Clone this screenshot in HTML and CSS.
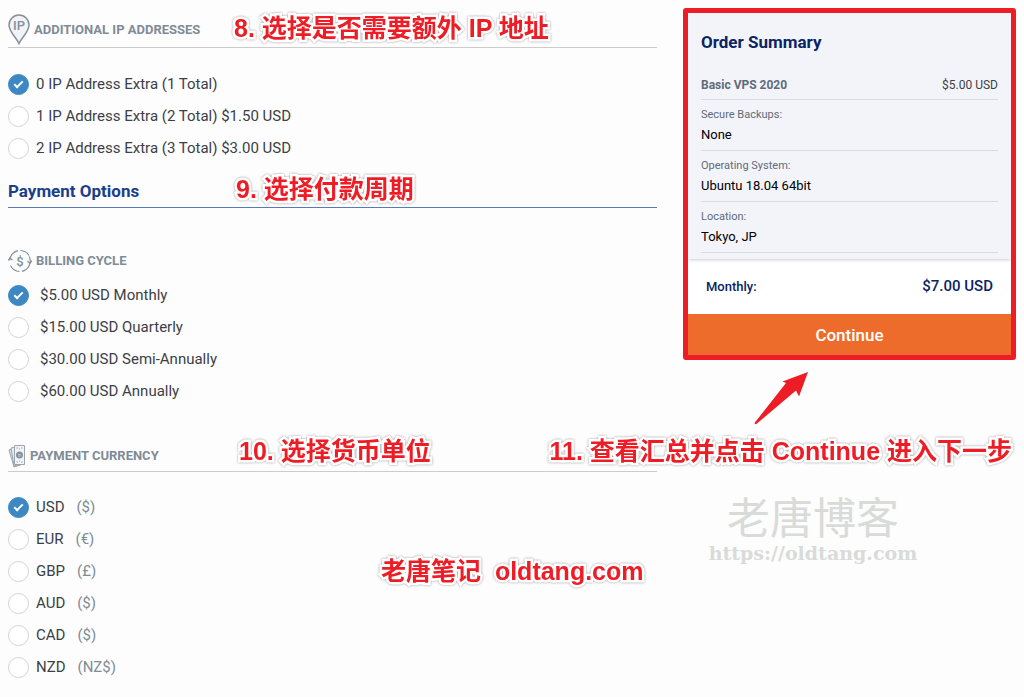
FILE: index.html
```html
<!DOCTYPE html>
<html lang="zh-CN">
<head>
    <meta charset="UTF-8">
    <meta name="viewport" content="width=device-width, initial-scale=1.0">
    <title>Configure VPS</title>
    <link rel="stylesheet" href="styles.css">
</head>
<body>

    <form class="page">
        <main class="config">

            <!-- Additional IP -->
            <section>
                <h3 class="heading lined">
                    <svg class="icon-pin" width="22" height="31" viewBox="0 0 22 31">
                        <path d="M11 29.500C8.500 23.500 1 18 1 11a10 10 0 0 1 20 0c0 7-7.500 12.500-10 18.500z" fill="#f1f3f9" stroke="#84919b" stroke-width="1.500"/>
                        <text x="11" y="16" text-anchor="middle">IP</text>
                    </svg>
                    Additional IP Addresses
                    <span class="note note-ip">8. 选择是否需要额外 IP 地址</span>
                </h3>
                <div class="options">
                    <label><input type="radio" name="ip" checked>0 IP Address Extra (1 Total)</label>
                    <label><input type="radio" name="ip">1 IP Address Extra (2 Total) $1.50 USD</label>
                    <label><input type="radio" name="ip">2 IP Address Extra (3 Total) $3.00 USD</label>
                </div>
            </section>

            <h2 class="title">Payment Options
                <span class="note note-cycle">9. 选择付款周期</span>
            </h2>

            <!-- Billing cycle -->
            <section class="billing">
                <h3 class="heading">
                    <svg width="24" height="24" viewBox="0 0 24 24" fill="none" stroke="#84919b" stroke-width="1.200">
                        <path d="M1.700 11.500A10.500 10.500 0 0 1 10 1.700M12.500 1.500A10.500 10.500 0 0 1 21 6.500M22 13A10.500 10.500 0 0 1 14 22.300M11.500 22.500A10.500 10.500 0 0 1 2.500 16.500"/>
                        <path d="M21.500 7.500l1 5.500M19.500 12l2.500 2.500 2-3M0 11.500l2-2.500 2.500 2"/>
                        <text x="12" y="17" text-anchor="middle">$</text>
                    </svg>
                    Billing Cycle
                </h3>
                <div class="options wide">
                    <label><input type="radio" name="cycle" checked>$5.00 USD Monthly</label>
                    <label><input type="radio" name="cycle">$15.00 USD Quarterly</label>
                    <label><input type="radio" name="cycle">$30.00 USD Semi-Annually</label>
                    <label><input type="radio" name="cycle">$60.00 USD Annually</label>
                </div>
            </section>

            <!-- Currency -->
            <section class="currency">
                <h3 class="heading lined">
                    <svg width="18" height="24" viewBox="0 0 18 24" stroke="#9aa5af">
                        <path d="M1 6l9-3 5 17-9 3z" fill="#dfe3e9"/>
                        <path d="M3 4l9-2 3 18-9 2z" fill="#e8ebf0"/>
                        <path d="M6.500 1.500h10v19h-10z" fill="#f1f3f9"/>
                        <circle cx="11.500" cy="11" r="3.500" fill="#84919b" stroke="none"/>
                        <path d="M10 10.500h3M10 12h3" stroke="#cfd5db" stroke-width=".7"/>
                        <path d="M8.500 4h1.500M13 4h1.500M8.500 18h1.500M13 18h1.500M11 5h1M11 17h1"/>
                    </svg>
                    Payment Currency
                    <span class="note note-currency">10. 选择货币单位</span>
                </h3>
                <div class="options">
                    <label><input type="radio" name="currency" checked>USD <span class="sign">($)</span></label>
                    <label><input type="radio" name="currency">EUR <span class="sign">(€)</span></label>
                    <label><input type="radio" name="currency">GBP <span class="sign">(£)</span></label>
                    <label><input type="radio" name="currency">AUD <span class="sign">($)</span></label>
                    <label><input type="radio" name="currency">CAD <span class="sign">($)</span></label>
                    <label><input type="radio" name="currency">NZD <span class="sign">(NZ$)</span></label>
                </div>
                <span class="note note-site">老唐笔记&nbsp; oldtang.com</span>
            </section>
        </main>

        <aside class="sidebar">
            <div class="summary">
                <div class="details">
                    <h2>Order Summary</h2>
                    <div class="product"><strong>Basic VPS 2020</strong><span>$5.00 USD</span></div>
                    <dl>
                        <div><dt>Secure Backups:</dt><dd>None</dd></div>
                        <div><dt>Operating System:</dt><dd>Ubuntu 18.04 64bit</dd></div>
                        <div><dt>Location:</dt><dd>Tokyo, JP</dd></div>
                    </dl>
                </div>
                <div class="total"><span>Monthly:</span><span class="price">$7.00 USD</span></div>
                <button type="button">Continue</button>
            </div>

            <svg class="arrow" width="56" height="56" viewBox="0 0 56 56">
                <path d="M54 1L45 25.500L42 19.500L3 52.500Q1 54 0.500 52L32 12L28.500 10.500z" fill="#ee1c24"/>
            </svg>
            <span class="note note-continue">11. 查看汇总并点击 Continue 进入下一步</span>

            <div class="watermark">
                <p>老唐博客</p>
                <p class="url">https://oldtang.com</p>
            </div>
        </aside>
    </form>

</body>
</html>
```

FILE: styles.css
```css
body {
    margin: 0;
    background: #fdfdfd;
    font-family: Roboto, "Noto Sans CJK SC", sans-serif;
    font-size: 15px;
    color: #3c4045;
}

.page {
    display: flex;
    align-items: flex-start;
    gap: 26px;
    padding: 8px;
}

.config {
    flex: 1;
}

/* Section headings */
.heading {
    position: relative;
    display: flex;
    align-items: center;
    gap: 4px;
    box-sizing: border-box;
    height: 40px;
    margin: 0;
    padding-top: 4px;
    border-bottom: 1px solid transparent;
    color: #7f8c97;
    font-size: 13px;
    font-weight: 700;
    text-transform: uppercase;
    white-space: nowrap;
}

.heading.lined {
    margin-bottom: 20px;
    border-color: #ccc;
}

.heading text {
    fill: #84919b;
    stroke: none;
    font-size: 13px;
    font-weight: 500;
}

.title {
    position: relative;
    margin: 0;
    padding: 13px 0 2px;
    border-bottom: 1px solid #5b78b8;
    color: #1a3e8c;
    font-size: 17px;
    font-weight: 700;
    line-height: 28px;
}

.billing {
    margin-top: 31px;
}

.currency {
    position: relative;
    margin-top: 25px;
}

.currency .heading {
    margin-bottom: 19px;
    padding-top: 8px;
}

/* Radio lists */
.options label {
    display: flex;
    align-items: center;
    height: 32px;
}

.options input {
    appearance: none;
    box-sizing: border-box;
    display: flex;
    justify-content: center;
    width: 21px;
    height: 21px;
    margin: 0 7px 0 0;
    border: 1px solid #d3d3d0;
    border-radius: 50%;
    background: #fff;
}

.options.wide input {
    margin-right: 11px;
}

.options input:checked {
    border-color: #3d87c3;
    background: #3d87c3;
}

.options input:checked::after {
    content: "";
    width: 3px;
    height: 7px;
    margin-top: 4px;
    border: solid #fff;
    border-width: 0 2px 2px 0;
    transform: rotate(45deg);
}

.sign {
    margin-left: 12px;
    color: #7f8c97;
}

/* Order summary */
.sidebar {
    position: relative;
    width: 333px;
}

.summary {
    overflow: hidden;
    border: 5px solid #ee1c24;
    border-radius: 3px;
    background: #fff;
}

.details {
    padding: 14px 13px 6px;
    background: #f3f4f9;
    box-shadow: 0 0 4px rgba(0, 0, 0, 0.3);
}

.details h2 {
    margin: 0 0 14px;
    color: #0a2463;
    font-size: 17px;
    font-weight: 700;
    line-height: 30px;
}

.product {
    display: flex;
    justify-content: space-between;
    border-bottom: 1px solid #d9dbdf;
    font-size: 12px;
    line-height: 28px;
}

.product strong {
    color: #5f6b7a;
    font-weight: 700;
}

dl {
    margin: 0;
}

dl div {
    padding: 5px 0;
    border-bottom: 1px solid #d9dbdf;
    line-height: 20px;
}

dt {
    color: #5f6b7a;
    font-size: 11px;
}

dd {
    margin: 0;
    color: #000;
    font-size: 13px;
}

.total {
    display: flex;
    justify-content: space-between;
    padding: 0 18px;
    color: #0a2463;
    font-size: 13px;
    font-weight: 500;
    line-height: 55px;
}

.price {
    font-size: 15px;
}

.summary button {
    display: block;
    width: 100%;
    height: 41px;
    border: none;
    background: #ee6c2b;
    color: #fff;
    font: 500 17px Roboto, sans-serif;
    cursor: pointer;
}

/* Red tutorial notes */
.note {
    position: absolute;
    color: #ee1c24;
    font: 700 25px/32px "Liberation Sans", "Noto Sans CJK SC", sans-serif;
    text-transform: none;
    white-space: nowrap;
    -webkit-text-stroke: 5px #fff;
    paint-order: stroke fill;
    filter: drop-shadow(0 0 1px rgba(0, 0, 0, 0.4));
}

.note-ip {
    left: 226px;
    top: 4px;
}

.note-cycle {
    left: 228px;
    top: 9px;
}

.note-currency {
    left: 231px;
    top: 3px;
}

.note-site {
    left: 373px;
    top: 123px;
}

.note-continue {
    right: 4px;
    top: 427px;
}

.arrow {
    display: block;
    margin: 11px 0 0 71px;
}

/* Watermark */
.watermark {
    width: 260px;
    margin-top: 69px;
    color: #d9dbd9;
    text-align: center;
}

.watermark p {
    margin: 0;
    font-size: 43px;
    font-weight: 400;
    line-height: 46px;
}

.watermark .url {
    font: 700 19px/22px "DejaVu Serif", serif;
}
```
